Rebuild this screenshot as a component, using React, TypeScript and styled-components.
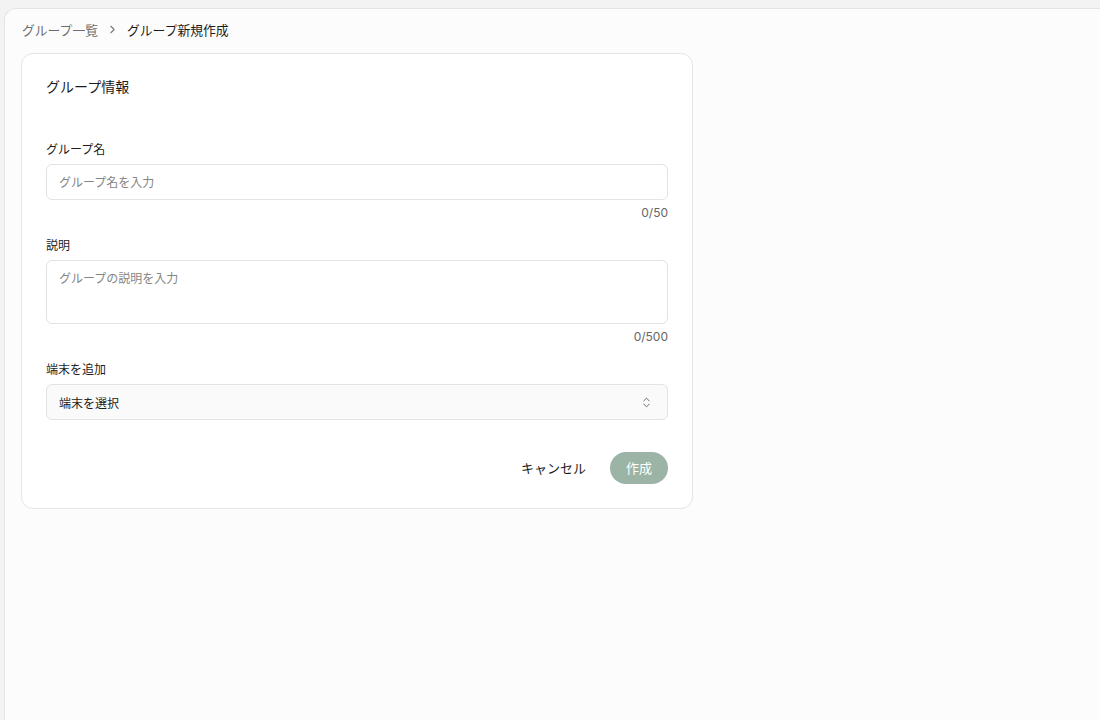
import React, { useState } from "react";
import styled, { createGlobalStyle } from "styled-components";
import { ChevronRight, ChevronsUpDown } from "lucide-react";

const GlobalStyle = createGlobalStyle`
  html, body {
    margin: 0;
    padding: 0;
    background: #f3f3f3;
    font-family: "Inter", "Noto Sans CJK JP", sans-serif;
    color: #1c1c1c;
  }
  * {
    box-sizing: border-box;
  }
`

const Shell = styled.div`
  padding: 8px 0 0 4px;
  min-height: 100vh;
`

const Main = styled.main`
  min-height: calc(100vh - 8px);
  background: #fcfcfc;
  border: 1px solid #e4e4e4;
  border-right: none;
  border-bottom: none;
  border-radius: 12px 0 0 0;
  padding: 10px 16px 24px;
`

const Crumbs = styled.nav`
  display: flex;
  align-items: center;
  gap: 6px;
  height: 20px;
  font-size: 12.8px;
  margin-bottom: 14px;
  padding-left: 1px;
`

const CrumbLink = styled.a`
  color: #6e6e6e;
  text-decoration: none;
`

const CrumbCurrent = styled.span`
  color: #1c1c1c;
`

const Separator = styled.span`
  display: flex;
  color: #777;
  margin: 0 2px;
`

const Card = styled.section`
  width: 672px;
  background: #ffffff;
  border: 1px solid #e5e5e5;
  border-radius: 12px;
  padding: 23px 24px 24px;
`

const CardTitle = styled.h2`
  margin: 0 0 43px;
  font-size: 14px;
  font-weight: 400;
  line-height: 20px;
`

const Field = styled.div`
  display: flex;
  flex-direction: column;
  margin-bottom: 15px;
`

const Label = styled.label`
  font-size: 12px;
  line-height: 20px;
  font-weight: 400;
  margin-bottom: 4px;
`

const TextInput = styled.input`
  height: 36px;
  border: 1px solid #e3e3e3;
  border-radius: 6px;
  background: #fff;
  padding: 0 12px;
  font: inherit;
  font-size: 12px;
  color: #1c1c1c;
  outline: none;
  &::placeholder {
    color: #858585;
  }
`

const TextArea = styled.textarea`
  height: 64px;
  border: 1px solid #e3e3e3;
  border-radius: 6px;
  background: #fff;
  padding: 9px 12px;
  font: inherit;
  font-size: 12px;
  line-height: 18px;
  color: #1c1c1c;
  resize: none;
  outline: none;
  &::placeholder {
    color: #858585;
  }
`

const Counter = styled.div`
  align-self: flex-end;
  margin-top: 5px;
  font-size: 12px;
  line-height: 16px;
  color: #666;
`

const Select = styled.button`
  height: 36px;
  display: flex;
  align-items: center;
  justify-content: space-between;
  border: 1px solid #e3e3e3;
  border-radius: 6px;
  background: #fafafa;
  padding: 0 14px 0 12px;
  font: inherit;
  font-size: 12px;
  color: #1c1c1c;
  cursor: pointer;
  & svg {
    color: #666;
  }
`

const Actions = styled.div`
  display: flex;
  justify-content: flex-end;
  gap: 8px;
  margin-top: 32px;
`

const Button = styled.button<{ $primary?: boolean }>`
  height: 32px;
  padding: 0 16px 1px;
  border: none;
  border-radius: 999px;
  font: inherit;
  font-size: 13px;
  font-weight: 400;
  cursor: pointer;
  background: ${(p) => (p.$primary ? "#9cb4a6" : "transparent")};
  color: ${(p) => (p.$primary ? "#ffffff" : "#1c1c1c")};
`

const NAME_MAX = 50;
const DESC_MAX = 500;

export default function App() {
  const [name, setName] = useState("");
  const [desc, setDesc] = useState("");

  return (
    <>
      <GlobalStyle />
      <Shell>
        <Main>
          <Crumbs>
            <CrumbLink href="#">グループ一覧</CrumbLink>
            <Separator>
              <ChevronRight size={13} strokeWidth={2} />
            </Separator>
            <CrumbCurrent>グループ新規作成</CrumbCurrent>
          </Crumbs>

          <Card>
            <CardTitle>グループ情報</CardTitle>

            <Field>
              <Label>グループ名</Label>
              <TextInput
                value={name}
                maxLength={NAME_MAX}
                placeholder="グループ名を入力"
                onChange={(e) => setName(e.target.value)}
              />
              <Counter>{name.length}/{NAME_MAX}</Counter>
            </Field>

            <Field>
              <Label>説明</Label>
              <TextArea
                value={desc}
                maxLength={DESC_MAX}
                placeholder="グループの説明を入力"
                onChange={(e) => setDesc(e.target.value)}
              />
              <Counter>{desc.length}/{DESC_MAX}</Counter>
            </Field>

            <Field>
              <Label>端末を追加</Label>
              <Select type="button">
                <span>端末を選択</span>
                <ChevronsUpDown size={13} strokeWidth={1.8} />
              </Select>
            </Field>

            <Actions>
              <Button type="button">キャンセル</Button>
              <Button type="button" $primary>作成</Button>
            </Actions>
          </Card>
        </Main>
      </Shell>
    </>
  );
}
